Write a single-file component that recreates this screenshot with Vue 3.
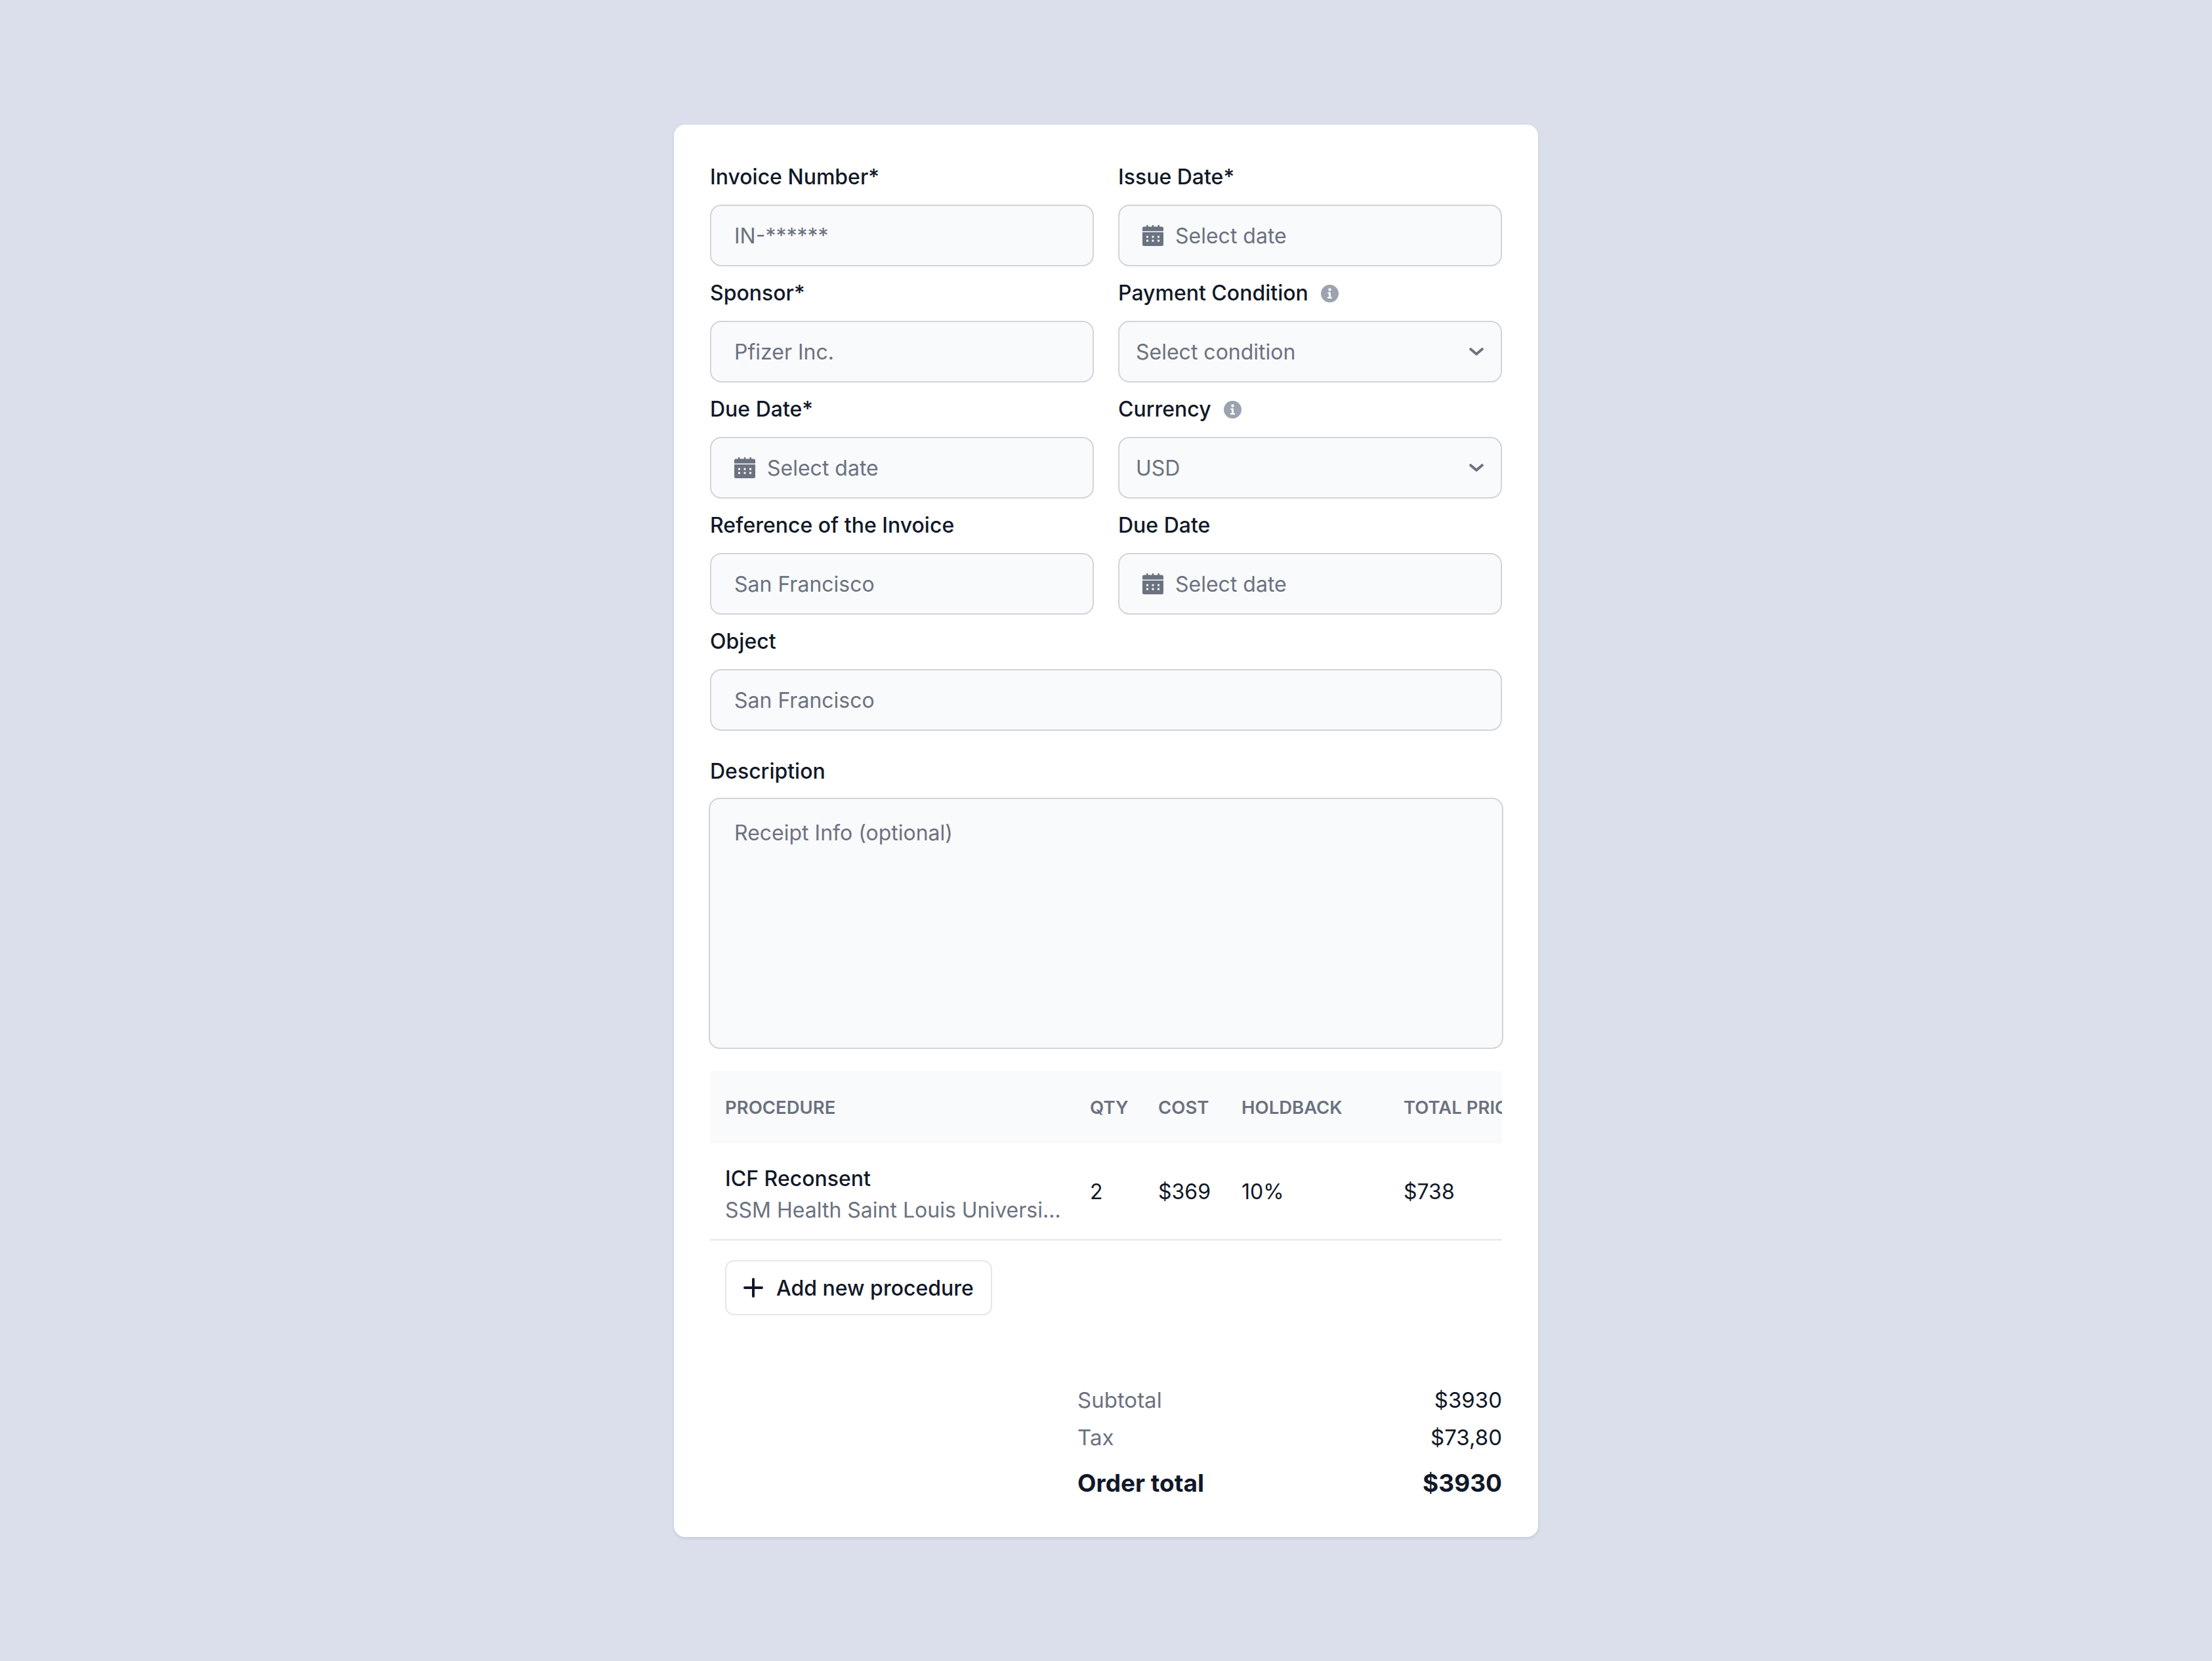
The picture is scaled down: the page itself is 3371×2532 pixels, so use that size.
<script setup>
const fields = [
  { label: 'Invoice Number*', type: 'text', value: 'IN-******' },
  { label: 'Issue Date*', type: 'date', value: 'Select date' },
  { label: 'Sponsor*', type: 'text', value: 'Pfizer Inc.' },
  { label: 'Payment Condition', type: 'select', value: 'Select condition', info: true },
  { label: 'Due Date*', type: 'date', value: 'Select date' },
  { label: 'Currency', type: 'select', value: 'USD', info: true },
  { label: 'Reference of the Invoice', type: 'text', value: 'San Francisco' },
  { label: 'Due Date', type: 'date', value: 'Select date' },
  { label: 'Object', type: 'text', value: 'San Francisco', wide: true }
];

const columns = ['Procedure', 'Qty', 'Cost', 'Holdback', 'Total price'];
</script>

<template>
  <div class="page">
    <div class="card">
      <div class="fields">
        <div v-for="f in fields" :key="f.label" class="field" :class="{ wide: f.wide }">
          <div class="label">
            <span>{{ f.label }}</span>
            <svg v-if="f.info" class="info" viewBox="0 0 27 27">
              <circle cx="13.5" cy="13.5" r="13.5" fill="#9ca3af" />
              <circle cx="13.5" cy="7.5" r="2.2" fill="#fff" />
              <path d="M10.5 11.5h4.4v7.2h2v2.3H10v-2.3h2.1v-4.9h-1.6z" fill="#fff" />
            </svg>
          </div>
          <div class="input" :class="f.type">
            <svg v-if="f.type === 'date'" class="calendar" viewBox="0 0 32 32">
              <rect x="6" y="0" width="2.6" height="4" rx="1" fill="#6b7280" />
              <rect x="14.7" y="0" width="2.6" height="4" rx="1" fill="#6b7280" />
              <rect x="23.4" y="0" width="2.6" height="4" rx="1" fill="#6b7280" />
              <path d="M0 9.5V5a2.5 2.5 0 0 1 2.5-2.5h27A2.5 2.5 0 0 1 32 5v4.5z" fill="#6b7280" />
              <path fill-rule="evenodd" d="M0 11h32v18.5a2.5 2.5 0 0 1-2.5 2.5h-27A2.5 2.5 0 0 1 0 29.5zM6 16.5v3h3v-3zm8.5 0v3h3v-3zm8.5 0v3h3v-3zM6 22.5v3h3v-3zm8.5 0v3h3v-3zm8.5 0v3h3v-3z" fill="#6b7280" />
            </svg>
            <span>{{ f.value }}</span>
            <svg v-if="f.type === 'select'" class="chevron" viewBox="0 0 22 12">
              <path d="M2.2 2.2L11 9.8l8.8-7.6" fill="none" stroke="#6b7280" stroke-width="4" stroke-linecap="round" stroke-linejoin="round" />
            </svg>
          </div>
        </div>
      </div>

      <div class="label description-label"><span>Description</span></div>
      <div class="textarea">Receipt Info (optional)</div>

      <div class="table">
        <div class="row head">
          <div v-for="c in columns" :key="c" class="cell">{{ c }}</div>
        </div>
        <div class="row body">
          <div class="cell procedure">
            <div class="name">ICF Reconsent</div>
            <div class="site">SSM Health Saint Louis University Hospital</div>
          </div>
          <div class="cell">2</div>
          <div class="cell">$369</div>
          <div class="cell">10%</div>
          <div class="cell">$738</div>
        </div>
      </div>

      <button class="add-button">
        <svg class="plus" viewBox="0 0 30 30">
          <path d="M15 2v26M2 15h26" fill="none" stroke="#111827" stroke-width="4" stroke-linecap="round" />
        </svg>
        Add new procedure
      </button>

      <div class="totals">
        <div class="total-row"><span class="muted">Subtotal</span><span>$3930</span></div>
        <div class="total-row"><span class="muted">Tax</span><span>$73,80</span></div>
        <div class="total-row grand"><span>Order total</span><span>$3930</span></div>
      </div>
    </div>
  </div>
</template>

<style>
body {
  background: #dadfeb;
}
</style>

<style scoped>
.page {
  min-height: 2532px;
  box-sizing: border-box;
  padding-top: 190px;
  font-family: Inter, "Liberation Sans", sans-serif;
  color: #111827;
  font-size: 32px;
}

.card {
  width: 1317px;
  height: 2153px;
  box-sizing: border-box;
  margin: 0 auto;
  padding: 59px 55px 0 55px;
  background: #ffffff;
  border-radius: 17px;
  box-shadow: 0 2px 5px rgba(0, 0, 0, 0.1);
}

.fields {
  display: grid;
  grid-template-columns: 585px 585px;
  column-gap: 37px;
  row-gap: 20px;
}

.field.wide {
  grid-column: 1 / 3;
}

.label {
  display: flex;
  align-items: center;
  height: 42px;
  font-weight: 500;
  margin-bottom: 21px;
  line-height: 42px;
}

.info {
  width: 27px;
  height: 27px;
  margin-left: 19px;
}

.input {
  display: flex;
  align-items: center;
  height: 94px;
  box-sizing: border-box;
  padding: 0 35px;
  background: #f9fafb;
  border: 2px solid #d1d5db;
  border-radius: 17px;
  color: #6b7280;
}

.input.select {
  padding: 0 26px 0 25px;
  justify-content: space-between;
}

.calendar {
  width: 32px;
  height: 32px;
  margin-right: 18px;
}

.chevron {
  width: 22px;
  height: 12px;
}

.description-label {
  margin-top: 41px;
  margin-bottom: 19px;
}

.textarea {
  height: 383px;
  box-sizing: border-box;
  margin: 0 -2px;
  padding: 31px 37px;
  background: #f9fafb;
  border: 2px solid #d1d5db;
  border-radius: 17px;
  color: #6b7280;
  line-height: 42px;
}

.table {
  margin-top: 34px;
  overflow: hidden;
}

.row {
  display: grid;
  grid-template-columns: 556px 104px 127px 247px 200px;
  align-items: center;
}

.cell {
  padding: 0 23px;
  white-space: nowrap;
  min-width: 0;
}

.head {
  height: 110px;
  background: #f9fafb;
  color: #6b7280;
  font-size: 27.5px;
  font-weight: 600;
  text-transform: uppercase;
}

.body {
  height: 146px;
  border-bottom: 2px solid #e5e7eb;
}

.procedure {
  padding: 10px 17px 0 23px;
}

.name {
  font-weight: 500;
  line-height: 42px;
  margin-bottom: 6px;
}

.site {
  color: #6b7280;
  line-height: 42px;
  overflow: hidden;
  text-overflow: ellipsis;
}

.add-button {
  display: flex;
  align-items: center;
  height: 84px;
  box-sizing: border-box;
  margin: 30px 0 0 23px;
  padding: 0 26px;
  background: #ffffff;
  border: 2px solid #e5e7eb;
  border-radius: 14px;
  color: #111827;
  font-family: inherit;
  font-size: 32px;
  font-weight: 500;
}

.plus {
  width: 30px;
  height: 30px;
  margin-right: 20px;
}

.totals {
  margin-top: 108px;
  margin-left: 560px;
  font-size: 33px;
}

.total-row {
  display: flex;
  justify-content: space-between;
  height: 42px;
  line-height: 42px;
  margin-bottom: 15px;
}

.muted {
  color: #6b7280;
}

.grand {
  margin-top: 28px;
  font-size: 37px;
  font-weight: 700;
}
</style>
